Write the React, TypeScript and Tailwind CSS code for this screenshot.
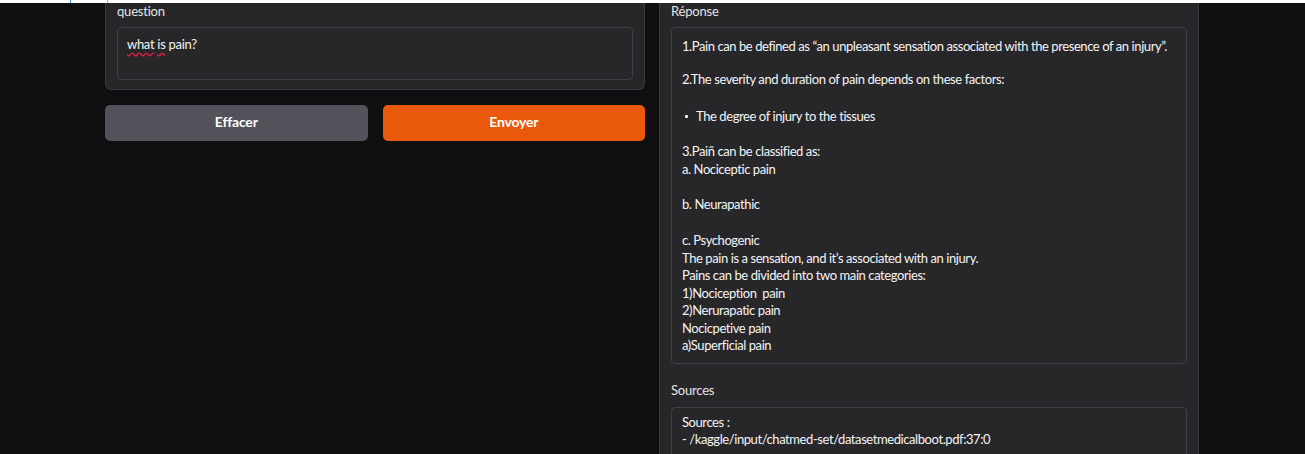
import React from "react";

const font = { fontFamily: "Lato, 'Noto Sans', sans-serif" };

export default function App() {
  return (
    <div className="w-[1305px] h-[454px] overflow-hidden bg-[#0f0f11] text-[#f4f4f5]" style={font}>
      <div className="h-[3px] bg-white flex">
        <div className="ml-[70px] w-[1px] h-[3px] bg-[#3b82f6]" />
        <div className="ml-[36px] w-[1px] h-[3px] bg-[#d4a640]" />
      </div>
      <div className="flex gap-[14px] pl-[105px]">
        {/* Left column */}
        <div className="w-[540px] flex flex-col">
          <div className="bg-[#27272a] border border-t-0 border-[#3a3a3f] rounded-b-[6px] px-[11px] pb-[9px]">
            <div className="text-[13px] tracking-[-0.2px] leading-[16px] text-[#e4e4e7] h-[24px]">question</div>
            <div className="border border-[#3f3f46] rounded-[4px] h-[53px] px-[9px] pt-[8px] text-[13px] tracking-[-0.3px] leading-[17.5px] text-[#f4f4f5] bg-[#27272a]">
              <span className="underline decoration-wavy decoration-[#e11d48] underline-offset-[3px]">what</span>{" "}
              <span className="underline decoration-wavy decoration-[#e11d48] underline-offset-[3px]">is</span> pain?
            </div>
          </div>
          <div className="flex gap-[15px] mt-[15px]">
            <button className="flex-1 h-[36px] rounded-[5px] bg-[#52525b] text-white font-bold text-[14px] tracking-[-0.2px] pb-[3px]">Effacer</button>
            <button className="flex-1 h-[36px] rounded-[5px] bg-[#ea580c] text-white font-bold text-[14px] tracking-[-0.2px] pb-[3px]">Envoyer</button>
          </div>
        </div>
        {/* Right column */}
        <div className="w-[540px] h-[451px] bg-[#27272a] border-x border-[#3a3a3f] px-[11px]">
          <div className="text-[13px] tracking-[-0.2px] leading-[16px] text-[#e4e4e7] h-[24px]">Réponse</div>
          <div className="border border-[#3f3f46] rounded-[4px] px-[10px] pt-[10px] pb-[8px] text-[13px] tracking-[-0.42px] leading-[17.5px]">
            <p>1.Pain can be defined as “an unpleasant sensation associated with the presence of an injury”.</p>
            <p className="mt-[15.5px]">2.The severity and duration of pain depends on these factors:</p>
            <ul className="mt-[19.5px] pl-[3px]">
              <li className="flex items-center">
                <span className="w-[3px] h-[3px] bg-[#f4f4f5] rounded-[1px] mr-[8px]" />
                The degree of injury to the tissues
              </li>
            </ul>
            <p className="mt-[17.5px]">3.Paiñ can be classified as:<br />a. Nociceptic pain</p>
            <p className="mt-[17.5px]">b. Neurapathic</p>
            <p className="mt-[19px]">
              c. Psychogenic<br />
              The pain is a sensation, and it’s associated with an injury.<br />
              Pains can be divided into two main categories:<br />
              1)Nociception&nbsp; pain<br />
              2)Nerurapatic pain<br />
              Nocicpetive pain<br />
              a)Superficial pain
            </p>
          </div>
          <div className="text-[13px] tracking-[-0.2px] leading-[16px] text-[#e4e4e7] mt-[18px] h-[25px]">Sources</div>
          <div className="border border-[#3f3f46] rounded-[4px] px-[10px] pt-[6px] h-[60px] text-[13px] tracking-[-0.42px] leading-[17.5px]">
            Sources :<br />- /kaggle/input/chatmed-set/datasetmedicalboot.pdf:37:0
          </div>
        </div>
      </div>
    </div>
  );
}
